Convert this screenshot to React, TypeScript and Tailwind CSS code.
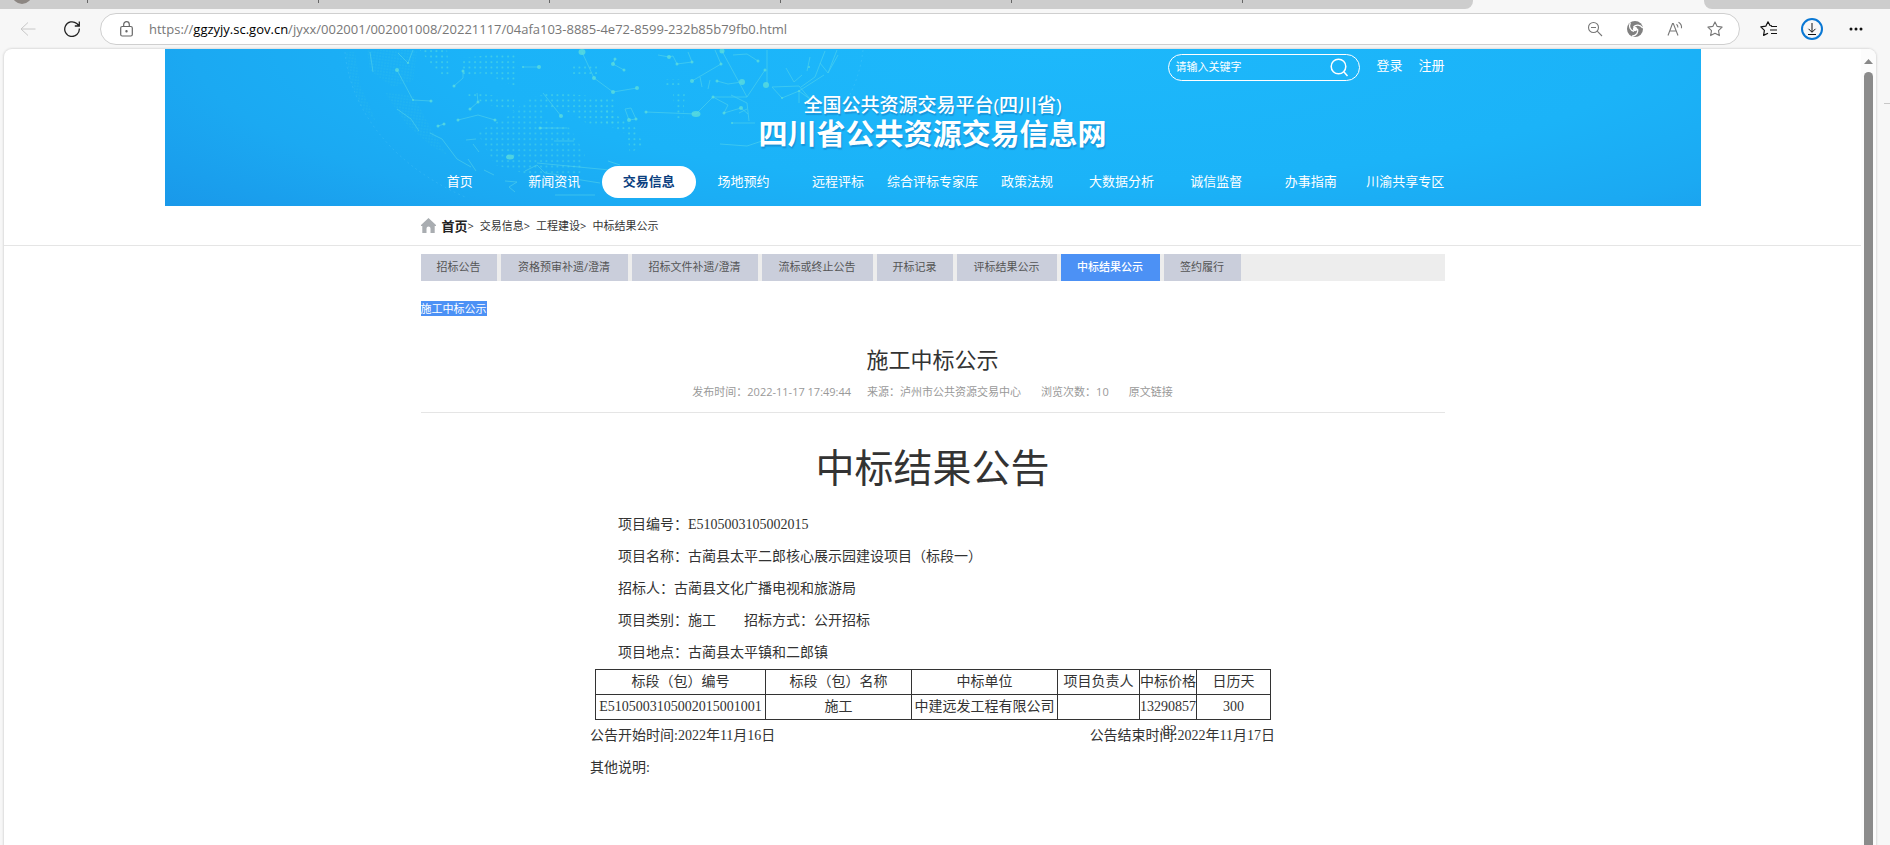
import { useState } from 'react'

const tabSeparators = [1, 2, 3, 4, 5]

const menu = [
  '首页',
  '新闻资讯',
  '交易信息',
  '场地预约',
  '远程评标',
  '综合评标专家库',
  '政策法规',
  '大数据分析',
  '诚信监督',
  '办事指南',
  '川渝共享专区',
]

const categories = [
  { label: '招标公告', width: 'w-[76px]' },
  { label: '资格预审补遗/澄清', width: 'w-[127px]' },
  { label: '招标文件补遗/澄清', width: 'w-[126px]' },
  { label: '流标或终止公告', width: 'w-[111px]' },
  { label: '开标记录', width: 'w-[76px]' },
  { label: '评标结果公示', width: 'w-[100px]' },
  { label: '中标结果公示', width: 'w-[99px]' },
  { label: '签约履行', width: 'w-[77px]' },
]

const columns = [
  { label: '标段（包）编号', width: 'w-[170px]' },
  { label: '标段（包）名称', width: 'w-[146px]' },
  { label: '中标单位', width: 'w-[146px]' },
  { label: '项目负责人', width: 'w-[82px]' },
  { label: '中标价格', width: 'w-[57px]' },
  { label: '日历天', width: 'w-[74px]' },
]

export default function App() {
  return (
    <div className="flex h-screen flex-col overflow-hidden bg-[#f7f7f7] font-['Open_Sans','Noto_Sans_CJK_SC',sans-serif] text-[#333]">
      <BrowserTabs />
      <Toolbar />
      <div className="flex min-h-0 flex-1">
        <div className="ml-1 flex min-w-0 flex-1 overflow-hidden rounded-t-lg bg-white shadow-[0_0_2px_1px_#dcdcdc]">
          <div className="min-w-0 flex-1">
            <Banner />
            <Breadcrumb />
            <main className="mx-auto w-full max-w-[1024px]">
              <Categories />
              <Article />
            </main>
          </div>
          <Scrollbar />
        </div>
        <div className="flex w-3.5 flex-col items-end pt-[54px]">
          <div className="h-px w-1.5 bg-[#c8c8c8]" />
        </div>
      </div>
    </div>
  )
}

function BrowserTabs() {
  return (
    <div className="flex h-[9px] shrink-0">
      <div className="relative flex flex-1 overflow-hidden rounded-br-lg bg-[#cdcdcd]">
        <div className="absolute -top-4 left-3 h-5 w-5 rounded-full bg-[#8c8682]" />
        <div className="h-[3px] w-[88px] border-r border-[#666]" />
        {tabSeparators.map((n) => (
          <div key={n} className="h-[3px] w-[231px] border-r border-[#666]" />
        ))}
      </div>
      <div className="w-[231px]" />
      <div className="w-[186px] rounded-bl-lg bg-[#cdcdcd]" />
    </div>
  )
}

function Toolbar() {
  return (
    <div className="flex h-10 shrink-0 items-center">
      <button type="button" aria-label="Back" className="ml-5 text-[#c8c8c8]">
        <svg width="16" height="16" viewBox="0 0 16 16" fill="none" stroke="currentColor">
          <path d="M15.5 8H1M8 1.5L1 8l7 6.500" />
        </svg>
      </button>
      <button type="button" aria-label="Refresh" className="ml-7 text-[#222]">
        <svg width="16" height="16" viewBox="0 0 16 16" fill="none" stroke="currentColor" strokeWidth="1.3">
          <path d="M15.300 7.500A7.300 7.300 0 1 1 12.800 2.600L15 4.700M15.300.5v4.500h-4.500" />
        </svg>
      </button>
      <div className="ml-5 flex h-8 flex-1 items-center rounded-full border border-[#cfcfcf] bg-white pr-4 pl-[19px] text-[#777]">
        <svg width="13" height="16" viewBox="0 0 13 16" fill="none" stroke="#666" strokeWidth="1.200">
          <rect x=".7" y="5.500" width="11.600" height="9.500" rx="1.500" />
          <path d="M3.700 5.500V3.500a2.800 2.800 0 0 1 5.600 0v2" />
          <circle cx="6.500" cy="10.200" r=".6" fill="#666" />
        </svg>
        <div className="ml-4 flex-1 text-[13px] leading-5 whitespace-nowrap">
          https://<span className="text-black">ggzyjy.sc.gov.cn</span>
          /jyxx/002001/002001008/20221117/04afa103-8885-4e72-8599-232b85b79fb0.html
        </div>
        <div className="flex items-center gap-6">
          <button type="button" aria-label="Zoom">
            <svg width="16" height="16" viewBox="0 0 16 16" fill="none" stroke="currentColor" strokeWidth="1.100">
              <circle cx="6.500" cy="6.500" r="5" />
              <path d="M10.200 10.200L15 15M4 6.500h5" />
            </svg>
          </button>
          <button type="button" aria-label="Extension">
            <svg width="16" height="16" viewBox="0 0 16 16">
              <circle cx="8" cy="8" r="8" fill="#808080" />
              <g fill="none" stroke="#fff" strokeWidth="1.300">
                <path d="M6.500 6C9 3 13 3.500 15.800 7" />
                <path d="M6.500 6C9 3 13 3.500 15.800 7" transform="rotate(120 8 8)" />
                <path d="M6.500 6C9 3 13 3.500 15.800 7" transform="rotate(240 8 8)" />
              </g>
              <circle cx="8" cy="8" r="2.200" fill="#fff" />
            </svg>
          </button>
          <button type="button" aria-label="Read aloud">
            <svg width="16" height="16" viewBox="0 0 16 16" fill="none" stroke="currentColor" strokeWidth="1.100">
              <path d="M1 14.500L5.500 2.500h.8L11 14.500M2.700 10h6.500M9.500 3.200c1 .8 1.500 2 1.400 3.300M11.500 1.200c2.300 1.300 3.300 3.500 3 6" />
            </svg>
          </button>
          <button type="button" aria-label="Add to favorites">
            <svg width="16" height="16" viewBox="0 0 16 16" fill="none" stroke="currentColor" strokeWidth="1.100" strokeLinejoin="round">
              <path d="M8 .9l2.200 4.500 4.900.7-3.600 3.500.9 5L8 12.200l-4.400 2.400.9-5L.9 6.100l4.900-.7z" />
            </svg>
          </button>
        </div>
      </div>
      <div className="flex items-center pl-5 text-[#111]">
        <button type="button" aria-label="Favorites">
          <svg width="18" height="16" viewBox="0 0 18 16" fill="none" stroke="currentColor" strokeWidth="1.200" strokeLinejoin="round">
            <path d="M12 4.800l-2-.3L8 .8 5.800 5.200l-5 .7 3.600 3.500-.8 5L8 12.200M11 5.500h6M10 9h7M11 12.500h6" />
          </svg>
        </button>
        <button type="button" aria-label="Downloads" className="ml-[23px]">
          <svg width="22" height="22" viewBox="0 0 22 22" fill="none" stroke="currentColor">
            <circle cx="11" cy="11" r="10" stroke="#0a78d4" strokeWidth="2" />
            <path d="M11 5v9M7.500 10.800L11 14.300l3.500-3.500M7 16.500h8" />
          </svg>
        </button>
        <button type="button" aria-label="Settings and more" className="mr-[27px] ml-[26px]">
          <svg width="14" height="4" viewBox="0 0 14 4" fill="currentColor">
            <circle cx="2" cy="2" r="1.500" />
            <circle cx="7" cy="2" r="1.500" />
            <circle cx="12" cy="2" r="1.500" />
          </svg>
        </button>
      </div>
    </div>
  )
}

function Scrollbar() {
  return (
    <div className="flex w-[15px] flex-col items-center bg-[#fcfcfc] pt-2.5">
      <svg width="9" height="5" viewBox="0 0 9 5" fill="#888">
        <path d="M4.500 0L9 5H0z" />
      </svg>
      <div className="mt-2 w-[9px] flex-1 rounded-t-full bg-[#8b8b8b]" />
    </div>
  )
}

function Banner() {
  const [active, setActive] = useState('交易信息')
  const [keyword, setKeyword] = useState('')
  return (
    <header className="relative mx-auto max-w-[1536px] bg-[radial-gradient(ellipse_85%_190%_at_58%_0%,#1db8fb_0%,#1bb3f8_45%,#1ba9f2_66%,#1995e8_90%)] pt-[5px] pb-2 text-white">
      <BannerArt />
      <div className="relative mx-auto flex max-w-[1024px] justify-end text-[13px]">
        <div className="flex h-[27px] w-48 items-center rounded-full border border-white pr-2.5 pl-1.5">
          <input
            type="text"
            aria-label="请输入关键字"
            placeholder="请输入关键字"
            value={keyword}
            onChange={(e) => setKeyword(e.target.value)}
            className="min-w-0 flex-1 bg-transparent text-[11px] outline-none placeholder:text-white"
          />
          <button type="button" aria-label="搜索">
            <svg width="19" height="19" viewBox="0 0 19 19" fill="none" stroke="#fff" strokeWidth="1.500">
              <circle cx="8.500" cy="8.500" r="7.300" />
              <path d="M13.800 13.800L17.500 18" />
            </svg>
          </button>
        </div>
        <a href="#login" className="ml-4 leading-[22px]">登录</a>
        <a href="#register" className="ml-4 leading-[22px]">注册</a>
      </div>
      <div className="relative mt-3 text-center text-shadow-[1px_2px_1px_rgb(20_100_170/0.4)]">
        <p className="text-[19px] leading-6 font-medium">全国公共资源交易平台(四川省)</p>
        <h1 className="text-[29px] leading-[34px] font-bold">四川省公共资源交易信息网</h1>
      </div>
      <nav className="relative mx-auto mt-[15px] grid max-w-[1040px] grid-cols-11">
        {menu.map((item) => (
          <a
            key={item}
            href="#menu"
            onClick={() => setActive(item)}
            className={
              item === active
                ? 'rounded-full bg-white pb-0.5 text-center text-[13px] leading-[30px] font-bold whitespace-nowrap text-[#0b3f7f]'
                : 'pb-0.5 text-center text-[13px] leading-[30px] whitespace-nowrap'
            }
          >
            {item}
          </a>
        ))}
      </nav>
    </header>
  )
}

function BannerArt() {
  return (
    <svg className="absolute inset-0 h-full w-full" aria-hidden="true">
      <defs>
        <pattern id="dots" width="5.500" height="5.500" patternUnits="userSpaceOnUse">
          <circle cx="2" cy="2" r=".9" fill="#5fe3dc" />
        </pattern>
        <pattern id="fine" width="3" height="3" patternUnits="userSpaceOnUse" patternTransform="rotate(8)">
          <circle cx="1" cy="1" r=".6" fill="#5fe3dc" />
        </pattern>
      </defs>
      <g fill="url(#dots)" opacity=".65">
        <path d="M255 1h27l3 28-13-6z" />
        <path d="M298 9l52-6v34l-32-13-20 4z" />
        <path d="M293 42l20 2 36 6v12l-28-7z" />
        <path d="M377 43l38 3 35 4v25l-25 1-27-16h-20z" />
        <path d="M435 50l10 12 25 16 8 17-13 10-3-20-22-10z" />
        <path d="M498 30h18v6h-18zM508 43h12l-2 28h-8z" />
        <path d="M408 17h24v8h-24z" />
      </g>
      <path d="M312 83l33-17 20-18 13-2v24l27 9 15 26-5 21h-50l-35-10z" fill="url(#dots)" opacity=".5" />
      <g fill="url(#fine)" opacity=".35">
        <path d="M202 1h50l-4 31-20 6-23-16z" />
        <path d="M220 44l28 2 20 37 14 23-17-10-23-20z" />
        <path d="M180 3h10l5 33 17 38-17-18-10-26z" />
      </g>
      <g fill="none" stroke="#6fe3e6" strokeWidth=".8" opacity=".5">
        <path d="M417 3l12 26 19 14 24-4M358 18h16M378 44l18 23M298 22v7l-9 8M312 44l1 9-8 7M293 71l20-5 17 5" />
        <path d="M232 21l16 30 18 1M233 4l10 10 5-13M273 77l6-2M375 79h27M389 92h20M303 110l8 12M301 91l10-1M308 95l6 8" />
        <path d="M372 114l73 7M205 3l3 20M232 60l14 10 8 12M265 84l12 6 15 20 14 8" />
        <path d="M340 132l12 1-8 5 6 5M319 121l10 5M360 122l12-6 8 8 14 2M390 146h40M410 130l25 4" />
        <path d="M493 6l11 2 4-1 4 8 15-2-4-10M550 1l6 14-29 17M557 2l25 46 18-27M552 32l11 3 14-2" />
        <path d="M481 63l50 2 17-17h34M548 48l15 8-4 8 17-5 7 6M568 6l14-1 11 7M607 38l10 11 17-7 25-16M607 38l27-1 11 13-11-8M634 42v12" />
        <path d="M555 95l27 2 18-6M567 74h23M460 60l4 11 7-1-5-11zM450 10l-2 5 11 6M535 28l2 10M545 31l-2 9M566 46l16 8 2 18M582 60l-8 4" />
        <path d="M621 19l8 14 8-7M642 22l3-14M655 14l8 10 10-18M660 2l-10 26-14 10M672 1l-9 23M602 1v34M443 112l12 4" />
      </g>
      <path d="M698 1c-3 30-18 60-40 84M180 3c4 50 40 110 120 145" fill="none" stroke="#8fe6ff" strokeWidth=".8" strokeDasharray="2 3" opacity=".2" />
      <g fill="#5fdfdb" opacity=".75">
        <ellipse cx="417" cy="3" rx="3.500" ry="3" />
        <circle cx="429" cy="29" r="2" />
        <circle cx="448" cy="43" r="2" />
        <circle cx="472" cy="39" r="2" />
        <circle cx="374" cy="18" r="2" />
        <circle cx="358" cy="18" r="1" />
        <circle cx="396" cy="67" r="2" />
        <circle cx="298" cy="22" r="1.500" />
        <circle cx="289" cy="37" r="1.500" />
        <circle cx="313" cy="53" r="1.500" />
        <circle cx="305" cy="60" r="1.500" />
        <circle cx="293" cy="71" r="1.500" />
        <circle cx="330" cy="71" r="1.500" />
        <circle cx="232" cy="21" r="2" />
        <circle cx="248" cy="51" r="1" />
        <circle cx="266" cy="52" r="1.500" />
        <circle cx="243" cy="14" r="1" />
        <circle cx="273" cy="77" r="1.500" />
        <circle cx="279" cy="75" r="1.500" />
        <circle cx="375" cy="79" r="1.500" />
        <ellipse cx="345" cy="108" rx="4" ry="2.500" />
        <circle cx="448" cy="15" r="2" />
        <circle cx="450" cy="10" r="1.500" />
        <circle cx="459" cy="21" r="1.500" />
        <circle cx="504" cy="8" r="2" />
        <circle cx="512" cy="15" r="1.500" />
        <circle cx="527" cy="13" r="1.500" />
        <circle cx="527" cy="32" r="2" />
        <circle cx="556" cy="15" r="1.500" />
        <circle cx="557" cy="2" r="2.500" />
        <circle cx="552" cy="32" r="1.500" />
        <circle cx="577" cy="33" r="3" />
        <circle cx="600" cy="21" r="1.500" />
        <circle cx="601" cy="36" r="3" />
        <circle cx="593" cy="12" r="1.500" />
        <circle cx="481" cy="63" r="1.500" />
        <ellipse cx="531" cy="65" rx="4.500" ry="3" />
        <circle cx="548" cy="48" r="1.500" />
        <circle cx="576" cy="59" r="2" />
        <circle cx="559" cy="64" r="1.500" />
        <circle cx="464" cy="71" r="2" />
        <circle cx="471" cy="70" r="1.500" />
        <circle cx="567" cy="74" r="1" />
        <circle cx="634" cy="42" r="1" />
        <circle cx="617" cy="49" r="1" />
        <circle cx="644" cy="18" r="1" />
      </g>
    </svg>
  )
}

function Breadcrumb() {
  return (
    <div className="h-10 border-b border-[#e5e5e5]">
      <div className="mx-auto flex h-full max-w-[1024px] items-center text-[11px] leading-4">
        <svg width="15" height="15" viewBox="0 0 15 15" fill="#a9adb1" aria-hidden="true">
          <path d="M7.500 0L15 7v1h-1.300v7H9.500v-4.500a2 2 0 0 0-4 0V15H1.300V8H0V7z" />
        </svg>
        <a href="#home" className="ml-1.5 text-[13px] font-bold text-[#222]">首页</a>
        <span className="mr-1.5">&gt;</span>
        <a href="#trade">交易信息</a>
        <span className="mr-1.5">&gt;</span>
        <a href="#build">工程建设</a>
        <span className="mr-1.5">&gt;</span>
        <a href="#result">中标结果公示</a>
      </div>
    </div>
  )
}

function Categories() {
  const [active, setActive] = useState('中标结果公示')
  return (
    <div className="mt-2 flex gap-1 bg-[#ededed]">
      {categories.map(({ label, width }) => (
        <button
          key={label}
          type="button"
          onClick={() => setActive(label)}
          className={`${width} h-[27px] text-center text-[11px] whitespace-nowrap ${
            label === active ? 'bg-[#4c91f5] font-medium text-white' : 'bg-[#cacedb] text-[#555]'
          }`}
        >
          {label}
        </button>
      ))}
    </div>
  )
}

function Article() {
  return (
    <>
      <div className="mt-5 flex text-[11px] leading-[15px]">
        <span className="bg-[#4c91f5] text-white">施工中标公示</span>
      </div>
      <div className="mt-7 border-b border-[#e5e5e5] pb-3 text-center">
        <h2 className="text-[22px] leading-[30px]">施工中标公示</h2>
        <div className="mt-2.5 flex justify-center text-[11px] leading-4 text-[#999]">
          <span>发布时间：2022-11-17 17:49:44</span>
          <span className="ml-4">来源：泸州市公共资源交易中心</span>
          <span className="ml-5">浏览次数：10</span>
          <a href="#source" className="ml-5">原文链接</a>
        </div>
      </div>
      <div className="mx-auto mt-8 max-w-[685px] font-['Liberation_Serif','Noto_Sans_CJK_SC',serif] text-sm leading-8">
        <h3 className="mb-4 text-center text-[39px] leading-[48px]">中标结果公告</h3>
        <div className="pl-7">
          <p>项目编号：E5105003105002015</p>
          <p>项目名称：古蔺县太平二郎核心展示园建设项目（标段一）</p>
          <p>招标人：古蔺县文化广播电视和旅游局</p>
          <p>项目类别：施工　　招标方式：公开招标</p>
          <p>项目地点：古蔺县太平镇和二郎镇</p>
        </div>
        <ResultTable />
        <div className="flex justify-between">
          <span>公告开始时间:2022年11月16日</span>
          <span>公告结束时间:2022年11月17日</span>
        </div>
        <p>其他说明:</p>
      </div>
    </>
  )
}

function ResultTable() {
  return (
    <table className="ml-[5px] table-fixed border-collapse text-center leading-6 whitespace-nowrap [&_td]:border [&_td]:border-[#333] [&_td]:p-0 [&_th]:border [&_th]:border-[#333] [&_th]:p-0">
      <thead>
        <tr>
          {columns.map(({ label, width }) => (
            <th key={label} className={`${width} font-normal`}>
              {label}
            </th>
          ))}
        </tr>
      </thead>
      <tbody>
        <tr>
          <td>E5105003105002015001001</td>
          <td>施工</td>
          <td>中建远发工程有限公司</td>
          <td></td>
          <td>
            {/* the decimals run over the row's bottom edge */}
            <div className="h-6">
              13290857
              <br />
              .82
            </div>
          </td>
          <td>300</td>
        </tr>
      </tbody>
    </table>
  )
}
